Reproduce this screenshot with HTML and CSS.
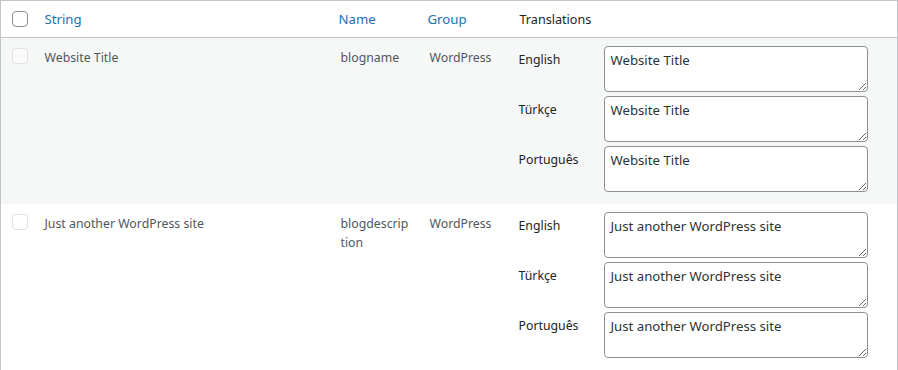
FILE: index.html
```html
<!DOCTYPE html>
<html lang="en">
<head>
    <meta charset="UTF-8">
    <meta name="viewport" content="width=device-width, initial-scale=1.0">
    <title>String Translations</title>
    <link rel="stylesheet" href="styles.css">
</head>
<body>
    <table class="strings-table">
        <colgroup>
            <col class="col-cb">
            <col class="col-string">
            <col class="col-name">
            <col class="col-group">
            <col>
        </colgroup>
        <thead>
            <tr>
                <th class="check-column"><input type="checkbox" class="cb"></th>
                <th class="sortable"><a href="#">String</a></th>
                <th class="sortable"><a href="#">Name</a></th>
                <th class="sortable"><a href="#">Group</a></th>
                <th class="plain">Translations</th>
            </tr>
        </thead>
        <tbody>
            <tr class="alt">
                <td class="check-column"><input type="checkbox" class="cb" disabled></td>
                <td class="cell-string">Website Title</td>
                <td class="cell-name">blogname</td>
                <td class="cell-group">WordPress</td>
                <td class="cell-translations">
                    <div class="tr-row"><label>English</label><textarea>Website Title</textarea></div>
                    <div class="tr-row"><label>Türkçe</label><textarea>Website Title</textarea></div>
                    <div class="tr-row"><label>Português</label><textarea>Website Title</textarea></div>
                </td>
            </tr>
            <tr>
                <td class="check-column"><input type="checkbox" class="cb" disabled></td>
                <td class="cell-string">Just another WordPress site</td>
                <td class="cell-name">blogdescription</td>
                <td class="cell-group">WordPress</td>
                <td class="cell-translations">
                    <div class="tr-row"><label>English</label><textarea>Just another WordPress site</textarea></div>
                    <div class="tr-row"><label>Türkçe</label><textarea>Just another WordPress site</textarea></div>
                    <div class="tr-row"><label>Português</label><textarea>Just another WordPress site</textarea></div>
                </td>
            </tr>
        </tbody>
    </table>
</body>
</html>
```

FILE: styles.css
```css
body { margin: 0; font-family: "Noto Sans", "Open Sans", sans-serif; font-size: 12.3px; color: #50575e; background: #fff; }
.strings-table { width: 898px; table-layout: fixed; border-collapse: collapse; border: 1px solid #c3c4c7; }
.col-cb { width: 34px; }
.col-string { width: 294px; }
.col-name { width: 89px; }
.col-group { width: 91px; }
th { height: 36px; padding: 0 10px; text-align: left; font-weight: normal; font-size: 13.2px; border-bottom: 1px solid #c3c4c7; }
th a { color: #2271b1; text-decoration: none; }
th.plain { color: #1d2327; padding-left: 11px; font-size: 12.6px; }
td { vertical-align: top; padding: 9px 10px 0 12px; line-height: 19px; }
tr.alt td { background: #f6f7f7; }
.check-column { padding: 0 0 0 11px; vertical-align: middle; }
td.check-column { vertical-align: top; padding-top: 10px; }
.cb { appearance: none; display: block; width: 16px; height: 16px; margin: 0; border: 1px solid #8c8f94; border-radius: 4px; background: #fff; }
.cb:disabled { border-color: rgba(220, 220, 222, 0.75); background: rgba(255, 255, 255, 0.5); }
.cell-string { padding-left: 10px; padding-top: 10px; }
.cell-name { word-break: break-all; padding-top: 10px; padding-right: 8px; }
.cell-group { padding-top: 10px; }
.cell-translations { padding: 8px 0 12px 10px; }
.tr-row { display: flex; margin-bottom: 4px; }
.tr-row:last-child { margin-bottom: 0; }
.tr-row label { width: 85px; padding-top: 4px; color: #1d2327; }
.tr-row textarea { width: 264px; height: 46px; box-sizing: border-box; padding: 3px 6px 2px; margin: 0; border: 1px solid #8c8f94; border-radius: 4px; font-family: inherit; font-size: 13.2px; line-height: 20px; color: #2c3338; background: #fff; }
```
